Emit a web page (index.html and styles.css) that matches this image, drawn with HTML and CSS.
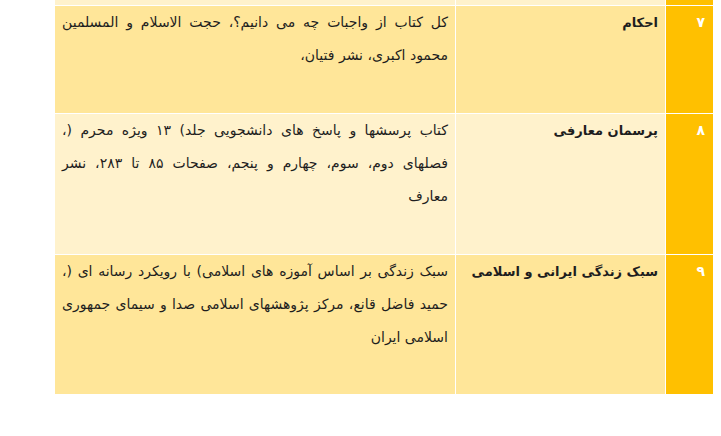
FILE: index.html
```html
<!DOCTYPE html>
<html lang="fa" dir="rtl">
<head>
<meta charset="utf-8">
<title>جدول منابع</title>
<link rel="stylesheet" href="styles.css">
</head>
<body>
<table class="sources">
  <tr class="stub">
    <td class="num"></td>
    <td class="title light"></td>
    <td class="desc light"></td>
  </tr>
  <tr class="r7">
    <td class="num">۷</td>
    <td class="title gold">احکام</td>
    <td class="desc gold">
      <span class="ln">کل کتاب از واجبات چه می دانیم؟، حجت الاسلام و المسلمین</span>
      <span class="ln end">محمود اکبری، نشر فتیان،</span>
    </td>
  </tr>
  <tr class="r8">
    <td class="num">۸</td>
    <td class="title light">پرسمان معارفی</td>
    <td class="desc light">
      <span class="ln">کتاب پرسشها و پاسخ های دانشجویی جلد) ۱۳ ویژه محرم (،</span>
      <span class="ln">فصلهای دوم، سوم، چهارم و پنجم، صفحات ۸۵ تا ۲۸۳، نشر</span>
      <span class="ln end">معارف</span>
    </td>
  </tr>
  <tr class="r9">
    <td class="num">۹</td>
    <td class="title gold">سبک زندگی ایرانی و اسلامی</td>
    <td class="desc gold">
      <span class="ln">سبک زندگی بر اساس آموزه های اسلامی) با رویکرد رسانه ای (،</span>
      <span class="ln">حمید فاضل قانع، مرکز پژوهشهای اسلامی صدا و سیمای جمهوری</span>
      <span class="ln end">اسلامی ایران</span>
    </td>
  </tr>
</table>
</body>
</html>
```
FILE: styles.css
```css
html, body {
  margin: 0;
  padding: 0;
  background: #ffffff;
}

body {
  padding: 0 7px 0 0;
  font-family: "DejaVu Sans", sans-serif;
  color: #1e1e1e;
}

.sources {
  border-collapse: separate;
  border-spacing: 1px;
  width: 660px;
  margin-top: -1px;
  table-layout: fixed;
}

.sources td {
  vertical-align: top;
  padding: 0 7px;
  font-size: 14px;
  line-height: 33px;
}

.stub td { height: 5px; line-height: 5px; padding: 0; }
.r7 { height: 107px; }
.r8 { height: 140px; }
.r9 { height: 139px; }

.num {
  width: 47px;
  box-sizing: border-box;
  background: #ffc000;
  color: #ffffff;
  font-weight: bold;
  padding-right: 8px !important;
}

.sources td.title {
  width: 209px;
  box-sizing: border-box;
  font-weight: bold;
  font-size: 13px;
  white-space: nowrap;
}

.desc {
  width: 400px;
  box-sizing: border-box;
}

.gold { background: #ffe699; }
.light { background: #fff2cc; }

.ln {
  display: block;
  text-align: justify;
  text-align-last: justify;
}

.ln.end {
  text-align-last: start;
}
```
